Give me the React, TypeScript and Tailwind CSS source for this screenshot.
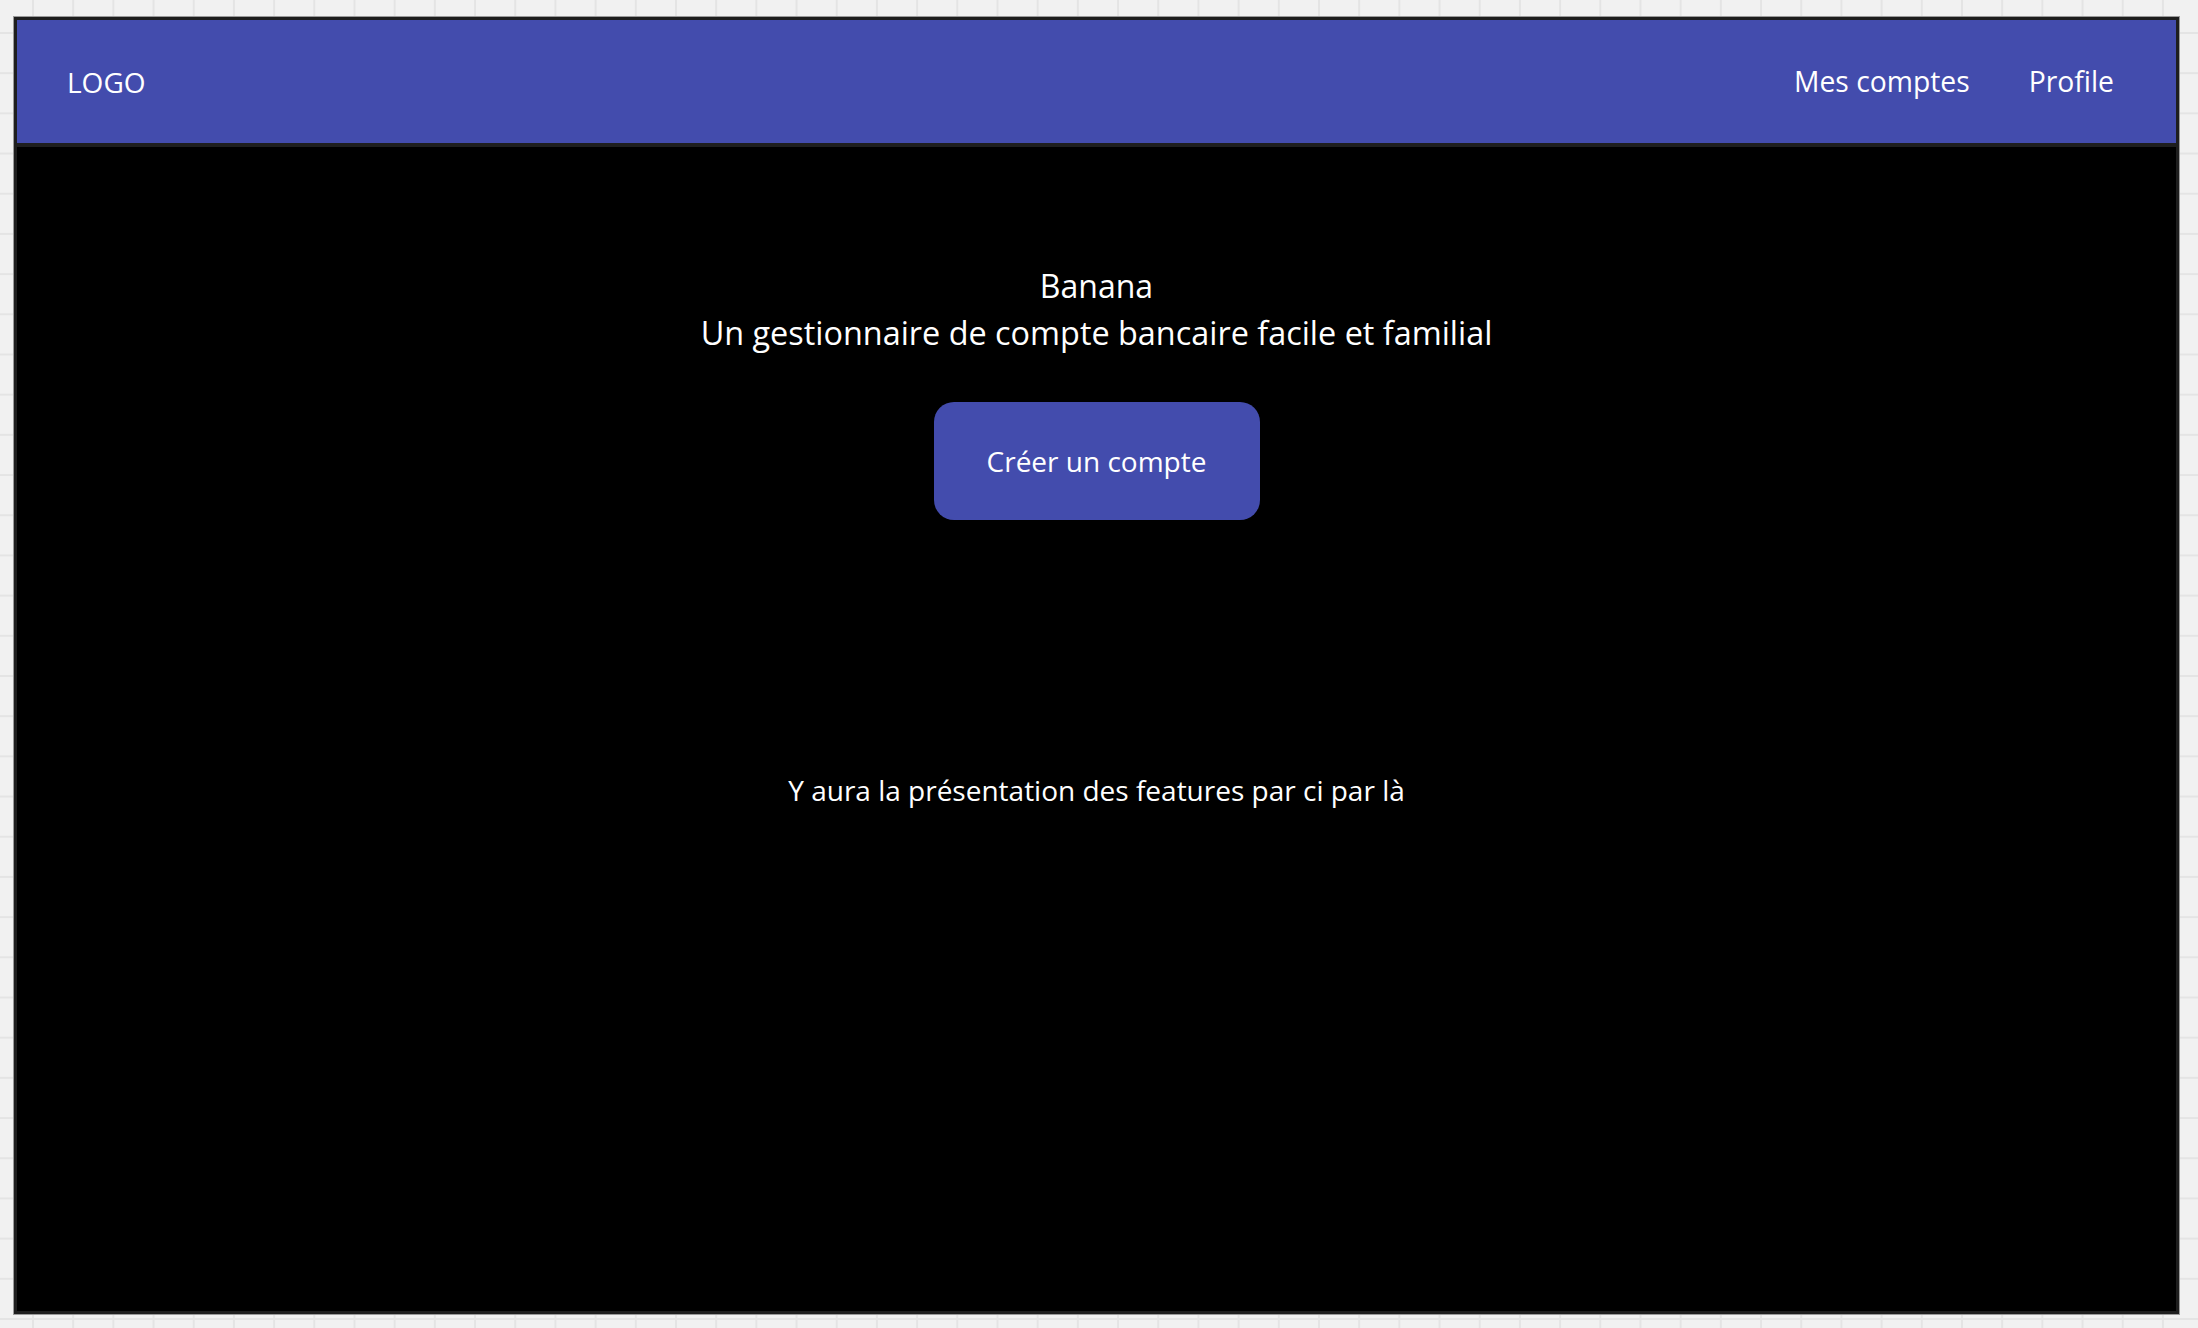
export default function App() {
  return (
    <div
      className="h-screen w-full overflow-hidden bg-[#f1f1f1] bg-[linear-gradient(to_right,#e4e4e4_2px,transparent_2px),linear-gradient(to_bottom,#e4e4e4_2px,transparent_2px)] bg-[size:40.2px_40.2px] bg-[position:32px_32px] pl-[13px] pt-[16px] font-['Open_Sans',sans-serif]"
    >
      <div className="flex h-[1299px] w-[2167px] flex-col border border-[#9a9a9a]">
        <div className="flex h-full flex-col border-[3px] border-[#1e1e1e] bg-black">
          {/* Top bar */}
          <header className="flex h-[127px] shrink-0 items-center justify-between border-b-4 border-[#1e1e1e] bg-[#434cad] pl-[50px] pr-[62px] text-[28px] text-white">
            <span>LOGO</span>
            <nav className="flex items-center gap-[59px] text-[28.3px]">
              <span>Mes comptes</span>
              <span>Profile</span>
            </nav>
          </header>

          {/* Hero */}
          <main className="flex flex-1 flex-col items-center pt-[116px] text-white">
            <div className="text-center leading-[46px]">
              <p className="text-[32px]">Banana</p>
              <p className="text-[32.4px]">Un gestionnaire de compte bancaire facile et familial</p>
            </div>
            <button className="mt-[47px] flex h-[118px] w-[326px] items-center justify-center rounded-[20px] bg-[#434cad] text-[28px] text-white">
              Créer un compte
            </button>
            <p className="mt-[247px] text-[28px] leading-[46px]">
              Y aura la présentation des features par ci par là
            </p>
          </main>
        </div>
      </div>
    </div>
  );
}
